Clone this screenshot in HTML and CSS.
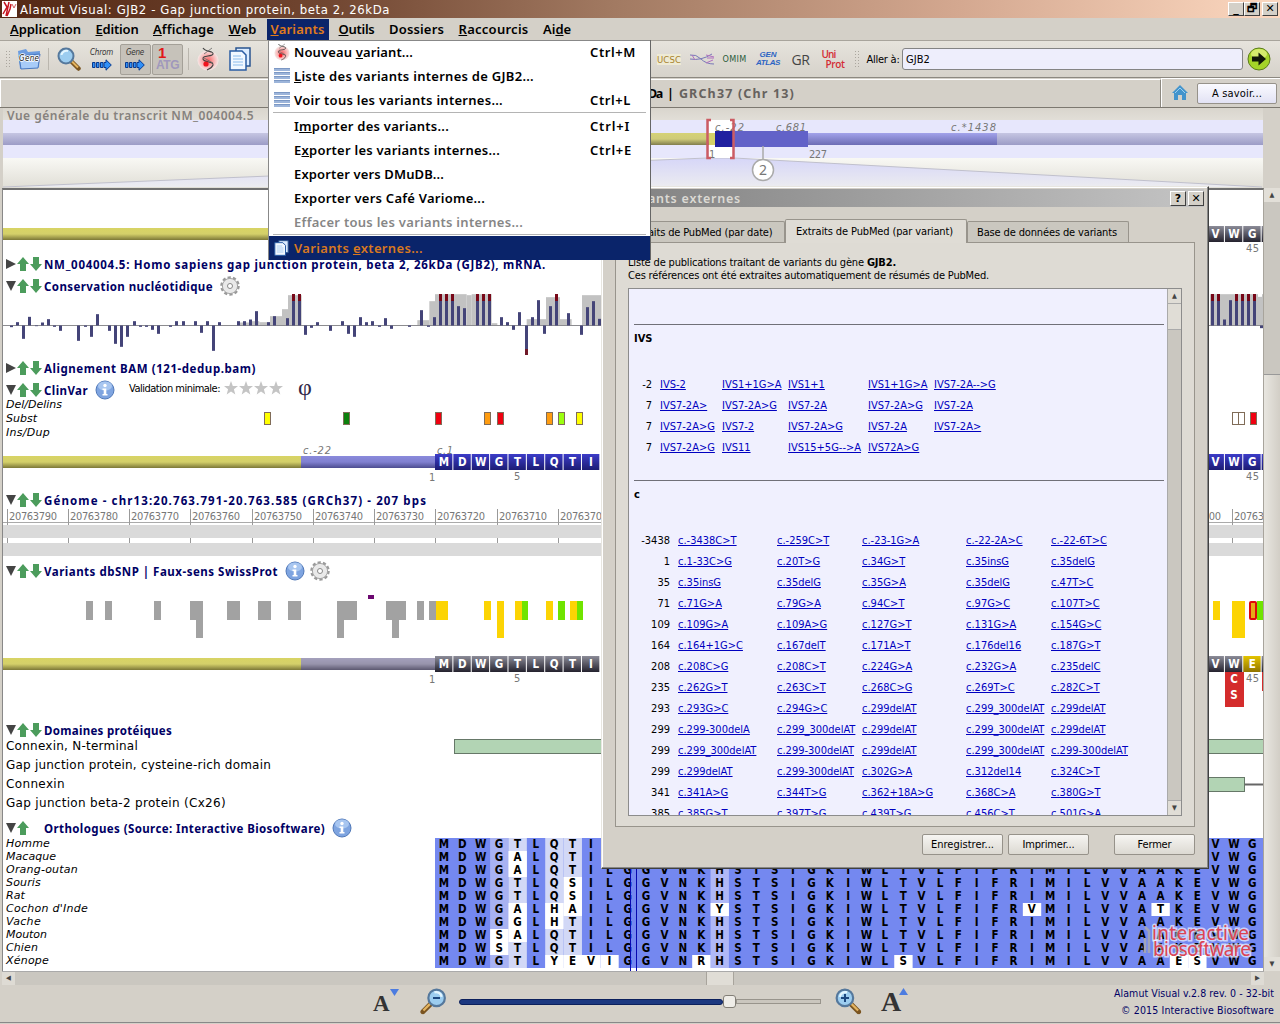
FILE: index.html
```html
<!DOCTYPE html>
<html lang="fr">
<head>
<meta charset="utf-8">
<title>Alamut Visual</title>
<link rel="stylesheet" href="styles.css">
</head>
<body>
<svg width="0" height="0" class="defs">
  <defs>
    <linearGradient id="gy" x1="0" y1="0" x2="0" y2="1"><stop offset="0" stop-color="#d8d464"/><stop offset=".5" stop-color="#d4d06a"/><stop offset="1" stop-color="#7c7838"/></linearGradient>
    <linearGradient id="gb" x1="0" y1="0" x2="0" y2="1"><stop offset="0" stop-color="#8a8adc"/><stop offset=".5" stop-color="#8080d0"/><stop offset="1" stop-color="#4c4c90"/></linearGradient>
    <linearGradient id="gv" x1="0" y1="0" x2="0" y2="1"><stop offset="0" stop-color="#a4a0bc"/><stop offset=".5" stop-color="#9894ac"/><stop offset="1" stop-color="#5c5870"/></linearGradient>
    <linearGradient id="gn" x1="0" y1="0" x2="0" y2="1"><stop offset="0" stop-color="#3c3cc8"/><stop offset="1" stop-color="#1c1c74"/></linearGradient>
    <linearGradient id="gk" x1="0" y1="0" x2="0" y2="1"><stop offset="0" stop-color="#8c8c98"/><stop offset="1" stop-color="#24222e"/></linearGradient>
    <linearGradient id="ge" x1="0" y1="0" x2="0" y2="1"><stop offset="0" stop-color="#e4c400"/><stop offset="1" stop-color="#907400"/></linearGradient>
    <linearGradient id="gl" x1="0" y1="0" x2="0" y2="1"><stop offset="0" stop-color="#c6c6e2"/><stop offset="1" stop-color="#9c9cc6"/></linearGradient>
    <linearGradient id="gm" x1="0" y1="0" x2="0" y2="1"><stop offset="0" stop-color="#a2a2ea"/><stop offset="1" stop-color="#6c6cb4"/></linearGradient>
    <linearGradient id="gt" x1="0" y1="0" x2="0" y2="1"><stop offset="0" stop-color="#d6d6f8"/><stop offset="1" stop-color="#ececf0"/></linearGradient>
    <linearGradient id="go" x1="0" y1="0" x2="0" y2="1"><stop offset="0" stop-color="#d9d5cd"/><stop offset=".6" stop-color="#fafaf6"/><stop offset="1" stop-color="#e0ded6"/></linearGradient>
    <radialGradient id="rd"><stop offset="0" stop-color="#f86060"/><stop offset=".6" stop-color="#fab4b4"/><stop offset="1" stop-color="#f4e8e6"/></radialGradient>
    <symbol id="arrU" viewBox="0 0 12 14"><path d="M6 0L12 7H9V14H3V7H0Z" fill="#4c9c5c"/></symbol>
    <symbol id="arrD" viewBox="0 0 12 14"><path d="M6 14L12 7H9V0H3V7H0Z" fill="#4c9c5c"/></symbol>
    <symbol id="info" viewBox="0 0 20 20"><circle cx="10" cy="10" r="9" fill="#7ea4e0" stroke="#5078b8"/><ellipse cx="10" cy="6" rx="7" ry="4.500" fill="#a8c6f0"/><circle cx="10" cy="5.500" r="1.700" fill="#fff"/><path d="M7.500 8.500H11.300V14H12.500V15.500H7.500V14H8.700V10H7.500Z" fill="#fff"/></symbol>
    <symbol id="gear" viewBox="0 0 20 20"><circle cx="10" cy="10" r="8.500" fill="none" stroke="#9a9a9a" stroke-width="2.500" stroke-dasharray="3.200 2.140"/><circle cx="10" cy="10" r="7.600" fill="#e9e9e9" stroke="#a4a4a4"/><circle cx="10" cy="10" r="2.500" fill="#fff" stroke="#888"/></symbol>
    <symbol id="star" viewBox="0 0 14 14"><path d="M7 0L8.800 5H14L9.900 8.200L11.300 13.500L7 10.400L2.700 13.500L4.100 8.200L0 5H5.200Z" fill="#c4c4c4"/></symbol>
    <symbol id="helix" viewBox="0 0 22 24"><ellipse cx="11" cy="13.500" rx="10.500" ry="10" fill="url(#rd)"/><path d="M6 1C8 5 17 4 16 7C15 10 5 8 6 12C7 16 17 14 16 18C15 21 12 22 10 23" fill="none" stroke="#444" stroke-width="1.100"/><path d="M15 1L7 7M7 11L16 16" fill="none" stroke="#666" stroke-width=".8"/><circle cx="9" cy="17" r="2.600" fill="#f0141e"/></symbol>
    <symbol id="docs" viewBox="0 0 22 24"><path d="M7 1H21V19H7Z" fill="#dcecff" stroke="#2a5490" stroke-width="1.500"/><path d="M1 4H13L17 8V23H1Z" fill="#f2f8ff" stroke="#2a5ca4" stroke-width="1.500"/><path d="M4 9H12M4 12H14M4 15H14M4 18H14" stroke="#8cbcec"/></symbol>
    <symbol id="list" viewBox="0 0 16 16"><path d="M0 1.500H16M0 5.500H16M0 9.500H16M0 13.500H16" stroke="#9db5da" stroke-width="3"/><path d="M0 .5H16M0 4.500H16M0 8.500H16M0 12.500H16" stroke="#7c98c4"/></symbol>
    <symbol id="arr" viewBox="0 0 20 12"><path d="M.5 3.500H3V8.500H.5ZM4.500 3.500H7V8.500H4.500ZM8.500 3.500H11V8.500H8.500ZM12 3.500H14V.8L19.300 6L14 11.200V8.500H12Z" fill="#3090f8" stroke="#083a90"/></symbol>
    <symbol id="lens" viewBox="0 0 24 24"><path d="M14 14L21.500 21.500" stroke="#7a5420" stroke-width="4.500" stroke-linecap="round"/><path d="M14.500 14L21 20.500" stroke="#e4b460" stroke-width="2"/><circle cx="9" cy="9" r="7.500" fill="#9ccdf0" stroke="#55789c" stroke-width="2"/><path d="M4.500 8A5 4.500 0 0 1 11 4" stroke="#e4f6ff" stroke-width="2" fill="none"/></symbol>
  </defs>
</svg>

<div class="app">
  <header class="titlebar">
    <svg width="15" height="16" viewBox="0 0 15 16"><path d="M0 0H15V16H0Z" fill="#fff"/><path d="M2 1L5 6L1 13M7 1L4 15M9 3L8 8L5 15" stroke="#c81420" stroke-width="1.500" fill="none"/><path d="M10 3L12 7L14 3" stroke="#d06060" fill="none"/></svg>
    <span class="grow"><span data-w="370">Alamut Visual: GJB2 - Gap junction protein, beta 2, 26kDa</span></span>
    <span class="wbtns"><i>_</i><i>🗗</i><i class="last">✕</i></span>
  </header>

  <nav class="menubar">
    <span data-w="71"><u>A</u>pplication</span><span data-w="43"><u>E</u>dition</span><span data-w="61"><u>A</u>ffichage</span><span data-w="28"><u>W</u>eb</span><span class="open"><span data-w="54"><u>V</u>ariants</span></span><span data-w="36"><u>O</u>utils</span><span data-w="55">Dossiers</span><span data-w="70"><u>R</u>accourcis</span><span data-w="28">Ai<u>d</u>e</span>
  </nav>

  <div class="toolbar">
    <span class="grip"></span>
    <span><svg width="24" height="22" viewBox="0 0 24 22"><path d="M1 3L9 1L11 4L23 3L22 19L3 21Z" fill="#6c9ce0"/><path d="M2 8L23 6L21 20L4 21Z" fill="#a8ccf8" stroke="#4878c0"/><text x="2" y="13" class="gene" textLength="20">Gene</text></svg></span>
    <span class="vsep"></span>
    <span><svg width="24" height="24"><use href="#lens"/></svg></span>
    <span class="stack"><em data-w="23">Chrom</em><svg width="20" height="12"><use href="#arr"/></svg></span>
    <span class="stack pressed"><em data-w="18">Gene</em><svg width="20" height="12"><use href="#arr"/></svg></span>
    <span class="stack pressed atg"><b>1</b><b class="l" data-w="23">ATG</b></span>
    <span class="vsep"></span>
    <span><svg width="22" height="24"><use href="#helix"/></svg></span>
    <span><svg width="22" height="24"><use href="#docs"/></svg></span>
    <span></span>
    <span class="ucsc"><span data-w="24">UCSC</span></span>
    <span><svg width="26" height="14" viewBox="0 0 26 14"><path d="M1 3Q7 2 12 7T25 12M1 7Q12 9 23 2" fill="none" stroke="#7878b8"/><path d="M3 3L6 8M17 3L25 5M17 11L24 8M18 6H25" stroke="#b070c0"/></svg></span>
    <span class="omim"><span data-w="24">OMIM</span></span>
    <span class="stack atlas"><b data-w="17">GEN</b><b data-w="24">ATLAS</b></span>
    <span class="gr"><span data-w="18">GR</span></span>
    <span class="stack uni"><span data-w="14">Uni</span><span class="prot" data-w="19">Prot</span></span>
    <span class="grip"></span>
    <span class="small"><span data-w="33">Aller à:</span></span>
    <span class="field"><span data-w="24">GJB2</span></span>
    <span><svg width="24" height="24" viewBox="0 0 24 24"><circle cx="12" cy="12" r="11" fill="#a4d428" stroke="#5c7c1c"/><ellipse cx="12" cy="7" rx="8" ry="5" fill="#d4ec6c"/><path d="M5 9.500H11.500V5.500L19 12L11.500 18.500V14.500H5Z" fill="#101808"/></svg></span>
  </div>

  <div class="infobar">
    <div class="infotext"><span data-w="14">Da</span><span>|</span><span class="muted" data-w="116">GRCh37 (Chr 13)</span></div>
    <div class="infoside">
      <svg width="16" height="16" viewBox="0 0 16 16"><path d="M0 8L8 0L16 8H14V15H10V10H6V15H2V8Z" fill="#4494cc"/><path d="M3 8L8 3L13 8" stroke="#9cd0f0" fill="none"/></svg>
      <span class="btn blue"><span data-w="50">A savoir...</span></span>
    </div>
  </div>

  <div class="overview">
    <svg id="overview" width="1260" height="80" viewBox="3 108 1260 80"></svg>
    <div class="ovtitle"><span data-w="247">Vue générale du transcrit NM_004004.5</span></div>
  </div>

  <div class="viewport">
    <main class="tracks">
      <section class="track" style="height:64px"><svg id="tA" width="1260" height="64" viewBox="3 190 1260 64"></svg></section>
      <section class="track raised" style="height:22px"><h2 class="closed"><i></i><svg><use href="#arrU"/></svg><svg><use href="#arrD"/></svg><span data-w="502">NM_004004.5: Homo sapiens gap junction protein, beta 2, 26kDa (GJB2), mRNA.</span></h2></section>
      <section class="track raised" style="height:82px"><svg id="tC" width="1260" height="82" viewBox="3 276 1260 82"></svg><h2><i></i><svg><use href="#arrU"/></svg><svg><use href="#arrD"/></svg><span data-w="169">Conservation nucléotidique</span><svg class="badge"><use href="#gear"/></svg></h2></section>
      <section class="track raised" style="height:21px"><h2 class="closed"><i></i><svg><use href="#arrU"/></svg><svg><use href="#arrD"/></svg><span data-w="212">Alignement BAM (121-dedup.bam)</span></h2></section>
      <section class="track" style="height:110px"><svg id="tE" width="1260" height="110" viewBox="3 379 1260 110"></svg>
        <div><h2><i></i><svg><use href="#arrU"/></svg><svg><use href="#arrD"/></svg><span data-w="44">ClinVar</span><svg class="badge"><use href="#info"/></svg><span class="valid"><span data-w="91">Validation minimale:</span></span><svg class="star"><use href="#star"/></svg><svg class="star"><use href="#star"/></svg><svg class="star"><use href="#star"/></svg><svg class="star"><use href="#star"/></svg><span class="phi">φ</span></h2>
        <ul class="sub"><li><span data-w="56">Del/Delins</span></li><li><span data-w="31">Subst</span></li><li><span data-w="44">Ins/Dup</span></li></ul></div></section>
      <section class="track" style="height:71px"><svg id="tF" width="1260" height="71" viewBox="3 489 1260 71"></svg><h2><i></i><svg><use href="#arrU"/></svg><svg><use href="#arrD"/></svg><span data-w="383">Génome - chr13:20.763.791-20.763.585 (GRCh37) - 207 bps</span></h2></section>
      <section class="track" style="height:159px"><svg id="tG" width="1260" height="159" viewBox="3 560 1260 159"></svg><h2><i></i><svg><use href="#arrU"/></svg><svg><use href="#arrD"/></svg><span data-w="234">Variants dbSNP | Faux-sens SwissProt</span><svg class="badge"><use href="#info"/></svg><svg class="badge2"><use href="#gear"/></svg></h2></section>
      <section class="track" style="height:98px"><svg id="tH" width="1260" height="98" viewBox="3 719 1260 98"></svg>
        <div><h2><i></i><svg><use href="#arrU"/></svg><svg><use href="#arrD"/></svg><span data-w="128">Domaines protéiques</span></h2>
        <ul class="domains"><li><span data-w="132">Connexin, N-terminal</span></li><li><span data-w="265">Gap junction protein, cysteine-rich domain</span></li><li><span data-w="59">Connexin</span></li><li><span data-w="220">Gap junction beta-2 protein (Cx26)</span></li></ul></div></section>
      <section class="track" style="height:154px"><svg id="tI" width="1260" height="154" viewBox="3 817 1260 154"></svg>
        <div><h2><i></i><svg><use href="#arrU"/></svg><svg></svg><span data-w="281">Orthologues (Source: Interactive Biosoftware)</span><svg class="badge"><use href="#info"/></svg></h2>
        <ul class="species"><li><span data-w="44">Homme</span></li><li><span data-w="50">Macaque</span></li><li><span data-w="72">Orang-outan</span></li><li><span data-w="35">Souris</span></li><li><span data-w="19">Rat</span></li><li><span data-w="82">Cochon d'Inde</span></li><li><span data-w="35">Vache</span></li><li><span data-w="41">Mouton</span></li><li><span data-w="32">Chien</span></li><li><span data-w="43">Xénope</span></li></ul></div></section>
    </main>
    <div class="vscroll"><i>▲</i><div class="vgutter"></div><div class="vthumb"></div><i>▼</i></div>
  </div>
  <div class="hscroll"><i>◀</i><span class="hthumb"></span><i>▶</i></div>

  <footer class="bottom">
    <svg class="za" width="28" height="34" viewBox="0 0 28 34"><text x="2" y="26" class="bigA">A</text><path d="M19 4H28L23.500 11Z" fill="#4c7ce0"/></svg>
    <svg class="zo" width="28" height="28" viewBox="0 0 28 28"><g transform="translate(27.500 0) scale(-1.100 1.100)"><use href="#lens" width="24" height="24"/></g><path d="M14 10H21" stroke="#1c4880" stroke-width="2"/></svg>
    <div class="slider"><div class="fill"></div><div class="knob"></div><div class="rest"></div></div>
    <svg class="zi" width="28" height="28" viewBox="0 0 28 28"><g transform="scale(1.100)"><use href="#lens" width="24" height="24"/></g><path d="M6 10H14M10 6V14" stroke="#1c4880" stroke-width="2"/></svg>
    <svg class="za" width="30" height="34" viewBox="0 0 30 34"><text x="1" y="26" class="bigA2">A</text><path d="M19 10H28L23.500 3Z" fill="#4c7ce0"/></svg>
    <div class="version"><span data-w="160">Alamut Visual v.2.8 rev. 0 - 32-bit</span><span data-w="153">© 2015 Interactive Biosoftware</span></div>
  </footer>
</div>

<div class="dialog">
  <div class="dtitle"><span data-w="120">Variants externes</span><i>?</i><i>✕</i></div>
  <div class="tabs"><span class="t1"><span data-w="144">Extraits de PubMed (par date)</span></span><span class="t2"><span data-w="157">Extraits de PubMed (par variant)</span></span><span class="t3"><span data-w="140">Base de données de variants</span></span></div>
  <div class="panel">
    <p><span data-w="268">Liste de publications traitant de variants du gène <b>GJB2.</b></span></p>
    <p><span data-w="361">Ces références ont été extraites automatiquement de résumés de PubMed.</span></p>
    <div class="listbox">
      <div class="listing">
        <hr>
        <h3>IVS</h3>
        <div class="refs ivs" id="ivs"></div>
        <hr class="second">
        <h3>c</h3>
        <div class="refs cdna" id="cdna"></div>
      </div>
      <div class="dscroll"><i>▲</i><div class="dthumb"></div><div class="dgutter"></div><i>▼</i></div>
    </div>
  </div>
  <div class="dbuttons"><span class="btn"><span data-w="63">Enregistrer...</span></span><span class="btn"><span data-w="52">Imprimer...</span></span><span class="btn last"><span data-w="34">Fermer</span></span></div>
</div>

<div class="menu">
  <div class="mi"><svg width="16" height="18"><use href="#helix"/></svg><span><span data-w="119">Nouveau <u>v</u>ariant...</span></span><span><span data-w="46">Ctrl+M</span></span></div>
  <div class="mi"><svg width="16" height="16"><use href="#list"/></svg><span><span data-w="240"><u>L</u>iste des variants internes de GJB2...</span></span></div>
  <div class="mi"><svg width="16" height="16"><use href="#list"/></svg><span><span data-w="209">Voir tous les variants internes...</span></span><span><span data-w="41">Ctrl+L</span></span></div>
  <div class="ms"></div>
  <div class="mi"><i></i><span><span data-w="155">I<u>m</u>porter des variants...</span></span><span><span data-w="40">Ctrl+I</span></span></div>
  <div class="mi"><i></i><span><span data-w="206">E<u>x</u>porter les variants internes...</span></span><span><span data-w="42">Ctrl+E</span></span></div>
  <div class="mi"><i></i><span><span data-w="150">Exporter vers DMuDB...</span></span></div>
  <div class="mi"><i></i><span><span data-w="191">Exporter vers Café Variome...</span></span></div>
  <div class="mi off"><i></i><span><span data-w="229">Effacer tous les variants internes...</span></span></div>
  <div class="ms"></div>
  <div class="mi sel"><svg width="15" height="16"><use href="#docs"/></svg><span><span data-w="129">Variants <u>e</u>xternes...</span></span></div>
</div>
<script src="app.js"></script>
</body>
</html>
```

FILE: styles.css
```css
* { box-sizing: border-box; }
body { margin: 0; width: 1280px; height: 1024px; overflow: hidden; background: #d4d0c8; font-family: "DejaVu Sans Condensed", "DejaVu Sans", sans-serif; font-stretch: condensed; font-size: 11px; color: #000; position: relative; }
.defs { position: absolute; }
i, em { font-style: normal; }
u { text-underline-offset: 1px; }
[data-w] { display: inline-block; white-space: pre; }
.app { display: flex; flex-direction: column; height: 1024px; }

.titlebar { height: 18px; display: flex; align-items: center; padding: 0 2px; gap: 3px; background: linear-gradient(90deg, #542814, #704530 25%, #a27a62 48%, #d4a890 75%, #fcd8c0); color: #fff; font-size: 13px; }
.titlebar .grow { flex: 1; }
.wbtns { display: flex; }
.wbtns i, .dtitle i { width: 16px; height: 14px; background: #d4d0c8; border: 1px solid; border-color: #fff #404040 #404040 #fff; color: #000; font: bold 11px/12px "DejaVu Sans", sans-serif; text-align: center; }
.wbtns .last { margin-left: 2px; }
.menubar { height: 22px; display: flex; gap: 14.5px; padding: 0 10px; line-height: 23px; font: 600 13px/23px "Noto Sans", sans-serif; }
.menubar .open { background: #0a246a; color: #e07c1c; padding: 0 4px; margin: 1px -4.500px 0; line-height: 21px; }
.toolbar { height: 38px; display: grid; grid-template-columns: 15px 28px 11px 30px 35px 32px 33px 8px 31px 33px 396px 34px 32px 33px 34px 31px 34px 14px 38px 341px 32px; align-items: center; justify-items: center; background: linear-gradient(#e6e3dc, #d6d2ca); border-top: 1px solid #a8a49c; border-bottom: 1px solid #8c8880; }
.toolbar > span { display: flex; justify-content: center; align-items: center; white-space: nowrap; }
.toolbar > .grip { width: 6px; height: 18px; background-image: radial-gradient(#aaa69e 35%, transparent 40%); background-size: 3px 3px; }
.toolbar > .vsep { width: 1px; height: 22px; background: #bab6ae; }
.toolbar .stack { flex-direction: column; height: 31px; font-size: 8px; line-height: 10px; }
.stack em { font-style: italic; margin-bottom: 1px; color: #333; }
.pressed { width: 31px; background: #c6c2ba; border: 1px solid #a4a098; border-radius: 2px; }
.atg b { font: bold 15px/13px "Liberation Sans", sans-serif; color: #e01818; align-self: flex-start; margin-left: 5px; }
.toolbar .atg .l { color: #a098bc; font-size: 12px; line-height: 13px; margin-left: 3px; }
.gene { font: italic 8px "DejaVu Sans Condensed", sans-serif; fill: #111; stroke: #fff; stroke-width: 1.500px; paint-order: stroke; }
.ucsc { color: #a8822c; background: #eeead4; font-size: 9.500px; }
.omim { color: #2c5c3c; font-size: 9px; }
.atlas b { color: #2c64c4; font: italic bold 8px/8px "Liberation Sans", sans-serif; }
.gr { font: 14px "Open Sans", sans-serif; color: #444; }
.toolbar .uni { color: #d42c34; font: 600 10px/10px "Open Sans", sans-serif; align-items: flex-start; }
.prot { margin-left: 4px; }
.toolbar .field { width: 341px; height: 22px; background: #eeeefc; border: 1px solid #848484; border-radius: 3px; justify-content: flex-start; padding-left: 3px; }

.infobar { height: 30px; display: flex; border-bottom: 1px solid #7c7870; }
.infotext { width: 1161px; margin-top: 1px; padding-left: 647px; display: flex; align-items: center; gap: 5px; border-right: 1px solid #8c8880; border-top: 1px solid #fff; border-left: 1px solid #fff; font: bold 12.500px "Noto Sans", sans-serif; }
.muted { color: #66625e; }
.infoside { flex: 1; display: flex; align-items: center; padding-left: 10px; gap: 9px; border-top: 1px solid #fff; border-left: 1px solid #fff; }
.btn { display: flex; justify-content: center; align-items: center; width: 81px; height: 21px; border: 1px solid #96928a; border-radius: 2px; background: linear-gradient(#f6f5f2, #dcd9d2); }
.btn.blue { width: 80px; background: linear-gradient(#fafaff, #e2e2f4); }
.overview { height: 80px; display: grid; padding-left: 3px; }
.overview > *, .track > * { grid-area: 1 / 1; min-width: 0; }
.ovtitle { font: 600 12px/15px "Noto Sans", sans-serif; color: #86827e; padding-left: 4px; }
.viewport { height: 783px; display: flex; padding-left: 2px; }
.tracks { width: 1262px; border-left: 1px solid #888; border-right: 1px solid #a8a49c; border-top: 2px solid #707070; background: #fff; }
.track { display: grid; position: relative; }
.track > svg { display: block; }
h2 { margin: 0; height: 22px; display: flex; align-items: center; padding-left: 3px; font: bold 11.500px "Noto Sans", sans-serif; color: #000064; }
.raised h2 { height: 20px; }
h2 > i { width: 10px; height: 10px; margin-right: 1px; background: #444; clip-path: polygon(0 0, 100% 0, 50% 100%); }
h2.closed > i { clip-path: polygon(0 0, 100% 50%, 0 100%); }
h2 > svg { width: 12px; height: 14px; margin-right: 1px; }
h2 > svg + svg { margin-right: 2px; }
h2 > svg.badge { width: 20px; height: 20px; margin-left: 7px; }
h2 > svg.badge2 { width: 20px; height: 20px; margin-left: 4px; }
h2 > svg.star { width: 14px; height: 14px; margin: -4px .5px 0; }
.valid { font: 11px "DejaVu Sans Condensed", sans-serif; color: #000; margin: -4px 3px 0 13px; }
.phi { font: 24px/20px "Liberation Serif", serif; color: #302848; margin-left: 15px; margin-top: -6px; }
ul { margin: 0; padding: 0 0 0 3px; list-style: none; }
.sub { margin-top: -3.500px; font: italic 11px/14px "DejaVu Sans", sans-serif; }
.domains { margin-top: -4px; font: 12px/19px "DejaVu Sans", sans-serif; }
.species { font: italic 11px/13px "DejaVu Sans", sans-serif; margin-top: -2px; }
.vscroll { width: 16px; display: flex; flex-direction: column; background: #e2dfd8; }
.vscroll i, .dscroll i { height: 14px; font-size: 7px; line-height: 14px; text-align: center; color: #444; }
.vgutter { height: 173px; background: #cac7c0; border-bottom: 1px solid #999; }
.vthumb { flex: 1; background: linear-gradient(90deg, #e8e6e0, #d2cec6); }
.hscroll { height: 14px; margin: 0 16px 0 2px; display: flex; background: #cac7c0; border-top: 1px solid #aaa; }
.hscroll i { width: 13px; background: #dedbd4; font-size: 7px; line-height: 13px; text-align: center; color: #444; }
.hthumb { width: 28px; margin: 0 517px 0 691px; background: #e0ddd6; border: solid #a8a49c; border-width: 0 1px; }
.bottom { height: 38px; display: flex; align-items: center; padding: 0 6px 4px 371px; border-bottom: 1px solid #888; }
.bigA { font: bold 23px "Liberation Serif", serif; fill: #333; }
.bigA2 { font: bold 28px "Liberation Serif", serif; fill: #333; }
.zo { margin-left: 20px; }
.slider { width: 362px; margin: 0 14px 0 12px; display: flex; align-items: center; }
.fill { width: 264px; height: 6px; background: #1c3880; border: 1px solid #0c205c; border-radius: 3px; }
.knob { width: 13px; height: 13px; background: #efede8; border: 1px solid #827e76; border-radius: 3px; }
.rest { flex: 1; height: 5px; border: 1px solid #98948c; background: #cac6be; }
.zi { margin-right: 17px; }
.version { flex: 1; display: flex; flex-direction: column; align-items: flex-end; line-height: 17px; color: #000064; font-size: 10.500px; }

.dialog { position: absolute; left: 601px; top: 186px; width: 608px; height: 683px; background: #d4d0c8; border: 1px solid; border-color: #e8e6e0 #404040 #404040 #e8e6e0; box-shadow: inset -1px -1px #888, inset 1px 1px #fff; padding: 2px 4px 0 2px; display: flex; flex-direction: column; }
.dtitle { height: 18px; display: flex; align-items: center; gap: 2px; padding: 0 0 0 17px; background: linear-gradient(90deg, #808080, #c4c4c4); color: #dcdad4; font: 600 12.500px "Noto Sans", sans-serif; }
.dtitle > span { margin-right: auto; }
.dtitle i { height: 15px; line-height: 13px; }
.tabs { height: 35px; padding: 12px 0 0 12px; display: flex; align-items: flex-end; }
.tabs > span { height: 21px; display: flex; align-items: center; justify-content: center; border: 1px solid #98948c; border-bottom: 0; background: #cac7bf; border-radius: 2px 2px 0 0; }
.tabs .t1 { width: 169px; }
.tabs .t2 { width: 182px; height: 24px; background: #dfdcd5; margin-bottom: -1px; position: relative; padding-right: 3px; }
.tabs .t3 { width: 162px; padding-right: 2px; }
.panel { margin: 0 9px 0 11px; height: 585px; border: 1px solid #98948c; background: #dedbd4; padding: 13px 12px 10px 12px; }
.panel p { margin: 0; height: 13px; line-height: 13px; }
.listbox { margin-top: 6px; height: 528px; display: flex; border: 1px solid #8c8c8c; }
.listing { flex: 1; background: #f0f0fe; overflow: hidden; padding: 0 3px 0 5px; height: 526px; }
hr { margin: 35px 0 0; border: 0; border-top: 1px solid #707078; }
hr.second { margin-top: 18px; }
h3 { margin: 7px 0 0; font-size: 11px; line-height: 14px; height: 46px; }
.refs { display: grid; grid-auto-rows: 21px; line-height: 14px; }
.refs a { color: #0000c0; text-decoration: underline; white-space: nowrap; }
.refs span { text-align: right; padding-right: 8px; }
.ivs { grid-template-columns: 26px 62px 66px 80px 66px 1fr; }
.cdna { grid-template-columns: 44px 99px 85px 104px 85px 1fr; }
.dscroll { width: 14px; display: flex; flex-direction: column; background: #e0ddd6; border-left: 1px solid #aaa; }
.dthumb { height: 27px; border: solid #aaa; border-width: 1px 0; }
.dgutter { flex: 1; background: #cac7c0; border-bottom: 1px solid #aaa; }
.dbuttons { display: flex; justify-content: flex-end; gap: 5px; padding: 7px 9px 0 0; }
.dbuttons .last { margin-left: 20px; }

.menu { position: absolute; left: 268px; top: 40px; width: 383px; height: 220px; background: #fff; border-left: 1px solid #888; border-right: 1px solid #666; box-shadow: inset 0 1px #888; font: 600 13px "Noto Sans", sans-serif; }
.mi { height: 24px; display: grid; grid-template-columns: 20px 296px 1fr; padding-left: 5px; align-items: center; line-height: 24px; }
.ms { height: 2px; margin: 0 4px; border-top: 1px solid #b4b4b4; }
.off { color: #868686; }
.sel { background: #0a246a; color: #d87820; }
.a9 { font: 11px "DejaVu Sans Condensed", sans-serif; fill: #777; }
.aa { font: bold 11.500px "DejaVu Sans Condensed", sans-serif; text-anchor: middle; }
.ital { font-style: italic; }
.logo { font: 19px "Noto Sans", sans-serif; fill: #dc4454; stroke: #fff; stroke-width: 3px; paint-order: stroke; stroke-opacity: .65; }
```

FILE: app.js
```js
const PITCH = 18.37, X0 = 435;
const rect = (x, y, w, h, fill, extra = '') => `<rect x="${x}" y="${y}" width="${w}" height="${h}" fill="${fill}" ${extra}/>`;
const line = (x1, y1, x2, y2, c, w = 1) => `<path d="M${x1} ${y1}L${x2} ${y2}" stroke="${c}" stroke-width="${w}" fill="none"/>`;
const label = (x, y, s, w, cls = '') => `<text x="${x}" y="${y}" class="a9 ${cls}" ${w ? `textLength="${w}"` : ''}>${s}</text>`;
const put = (id, s) => { document.getElementById(id).innerHTML = s; };
const HUMAN = 'MDWGTLQTILGGVNKHSTSIGKIWLTVLFIFRIMILVVAAKEVWG';

function residues(y, fill, from, to, swap = {}) {
  let s = '';
  for (let i = from; i < to; i++) {
    const x = X0 + i * PITCH, c = swap[i] || HUMAN[i] || '';
    s += rect(x, y, PITCH - 1, 16, swap[i] ? 'url(#ge)' : fill);
    s += `<text x="${x + 9}" y="${y + 12}" class="aa" fill="#fff">${c}</text>`;
  }
  return s;
}

// transcript overview
put('overview', rect(3, 108, 1260, 80, 'url(#go)') + rect(3, 120, 1260, 38, '#e7e7fc') + rect(3, 133, 1260, 12, 'url(#gl)')
  + rect(500, 133, 215, 12, 'url(#gy)', 'opacity=".85"')
  + `<path d="M3 187L707 158H734L1262 187Z" fill="url(#gt)"/><path d="M3 187L707 158H734L1262 187" fill="none" stroke="#c0c0cc"/>`
  + rect(709, 120, 24, 38, '#fff') + rect(709, 133, 7, 12, '#d4d068')
  + rect(808, 133, 189, 12, 'url(#gm)') + rect(734, 131, 74, 16, '#6262c8') + rect(715, 131, 19, 16, '#2020a0')
  + label(715, 131, 'c.-22', 29, 'ital') + label(776, 131, 'c.681', 30, 'ital') + label(951, 131, 'c.*1438', 45, 'ital')
  + label(709, 158, '1') + label(809, 158, '227', 18)
  + `<path d="M711 120H707.500V158H711M730 120H733.500V158H730" fill="none" stroke="#cc5c64" stroke-width="2.500"/>`
  + line(763, 146, 763, 160, '#aaa', 1.500) + `<circle cx="763" cy="170" r="10.500" fill="#fff" stroke="#aaa" stroke-width="1.500"/>`
  + `<text x="763" y="175" text-anchor="middle" fill="#777" font-family="Noto Sans" font-size="14">2</text>`);

put('tA', rect(3, 228, 800, 12, 'url(#gy)') + residues(226, 'url(#gk)', 42, 46) + label(1246, 252, '45', 13));

// conservation: [x, value] pairs, in thirds of a pixel
const left = [35,-5,52,10,70,-40,88,26,109,-2,127,9,145,19,163,-4,181,-16,235,-46,256,-4,274,-34,292,34,328,-16,346,-55,364,-64,382,-34,403,13,421,-4,439,-4,457,-13,475,-25,511,-4,529,13,550,13,586,13,604,-22,622,13,640,-76,658,10,715,13,733,13,751,18,769,43,805,10,823,28,862,22,880,94,898,94];
const mid = [16,-28,34,-7,52,10,91,-16,127,13,145,-25,163,-34,181,25,199,10,217,13,238,-4,256,22,274,-10,328,-4,364,46,385,-4,403,25,421,94,439,94,457,94,475,58,493,52,532,94,550,94,568,94,604,25,622,10,640,-13,658,40,679,-88,697,25,715,76,733,-25,751,58,769,94,805,37,844,-28,862,55,880,73,898,20];
const right = [217,94,235,94,253,18,271,76,289,94,307,94,325,94,343,94,364,-8];
const shade = [[0,[712,751,9,751,778,13,778,810,10,810,846,28,846,864,49,864,905,91]],[300,[352,388,16,388,405,73,405,500,94,500,515,91,515,575,94,575,592,7,680,738,19,738,780,85,780,815,19,846,903,91]],[1140,[210,354,94,354,366,86,366,372,94]]];
let cons = '';
for (const [o, a] of shade) for (let i = 0; i < a.length; i += 3) cons += rect(o + a[i] / 3, 325.5 - a[i + 2] / 3, (a[i + 1] - a[i]) / 3, a[i + 2] / 3, '#c2c2c2');
cons += line(3, 325.5, 1263, 325.5, '#8c8c90');
for (const [o, a] of [[0, left], [300, mid], [1140, right]]) for (let i = 0; i < a.length; i += 2) {
  const v = a[i + 1] / 3, x = Math.round(o + a[i] / 3 - 1.5);
  cons += rect(x, v > 0 ? 325.5 - v : 325.5, 3, Math.abs(v), '#444478');
  if (v > 31) cons += rect(x, 294, 3, 7, '#780818');
  if (v < -28) cons += rect(x, 349, 3, 6, '#701828');
}
put('tC', cons);

const mark = (x, c) => rect(x + .5, 412.5, 6, 12, c, 'stroke="#806c58"');
const strip = (y, g) => rect(3, y, 298, 12, 'url(#gy)') + rect(301, y, 134, 12, g);
put('tE', [[264,'#ff0'],[343,'#0c800c'],[435,'#f00010'],[484,'#ff9c10'],[497,'#f00010'],[546,'#ff9c10'],[558,'#9cff10'],[576,'#ff0'],[1232,'#fff'],[1238,'#fff'],[1250,'#f00010']].map(m => mark(...m)).join('')
  + strip(456, 'url(#gb)') + residues(454, 'url(#gn)', 0, 9) + residues(454, 'url(#gn)', 42, 46)
  + label(303, 454, 'c.-22', 28, 'ital') + label(437, 454, 'c.1', 16, 'ital') + label(429, 481, '1') + label(514, 480, '5') + label(1246, 480, '45', 13));

// genomic ruler
let ruler = line(3, 522.5, 1263, 522.5, '#aaa') + rect(3, 525, 1260, 13, '#dadada') + rect(3, 543, 1260, 13, '#dadada');
[7, 68, 129, 190, 252, 313, 374, 435, 497, 558, 1171, 1232].forEach((x, i) => {
  const n = i < 10 ? 20763790 - i * 10 : 20763600 - (i - 10) * 10;
  ruler += line(x + .5, 509, x + .5, 525, '#999') + line(x + .5, 538, x + .5, 543, '#999') + label(x + 2, 520, n, 48);
});
put('tF', ruler);

const G = '#a2a2a2', Y = '#fcd404', N = '#70e400';
put('tG', [[86,7,G],[105,7,G],[154,7,G],[190,13,G],[227,13,G],[258,13,G],[288,13,G],[337,20,G],[386,20,G],[417,7,G],[429,7,G],[436,12,Y],[484,7,Y],[515,7,Y],[522,6,N],[546,7,Y],[558,7,N],[570,7,Y],[577,6,N],[1213,7,Y],[1257,6,N]].map(([x, w, c]) => rect(x, 601, w, 19, c)).join('')
  + rect(196, 601, 7, 37, G) + rect(337, 601, 7, 37, G) + rect(392, 601, 7, 37, G) + rect(497, 601, 7, 37, Y) + rect(1232, 601, 13, 37, Y) + rect(1250, 602, 6, 17, '#e8a818', 'stroke="#e00808" stroke-width="2" rx="1"')
  + rect(368, 595, 6, 4, '#6c0870') + strip(658, 'url(#gv)') + residues(656, 'url(#gk)', 0, 9) + residues(656, 'url(#gk)', 42, 46, { 44: 'E' })
  + rect(1225, 672, 19, 35, '#d42c2c') + rect(1262, 672, 2, 19, '#d42c2c')
  + `<text x="1234" y="683" class="aa" fill="#fff">C</text><text x="1234" y="699" class="aa" fill="#fff">S</text>`
  + label(429, 683, '1') + label(514, 682, '5') + label(1246, 682, '45', 13));

put('tH', rect(454.5, 739.5, 830, 14, '#b2d4b4', 'stroke="#667868"') + rect(900.5, 777.5, 344, 14, '#b2d4b4', 'stroke="#667868"') + line(1245, 784.5, 1263, 784.5, '#666', 2));

// ortholog alignment
const diffs = [{}, {4:'A'}, {4:'A'}, {7:'S'}, {7:'S'}, {4:'A',6:'H',7:'A',15:'Y',32:'V',39:'T'}, {4:'G',6:'H'}, {3:'S',4:'A'}, {3:'S'}, {6:'Y',7:'E',8:'V',9:'I',14:'R',25:'S',40:'E',41:'S'}];
const tint = { 3: '#a8b2f2', 4: '#d2d8f6', 6: '#d2d8f6', 7: '#d2d8f6', 15: '#b0b8f6' };
let al = rect(435, 838, 828, 130, '#7488f0');
for (const c in tint) al += rect(X0 + c * PITCH, 838, PITCH, 130, tint[c]);
diffs.forEach((d, r) => {
  for (let i = 0; i < 45; i++) {
    const x = X0 + i * PITCH, y = 838 + r * 13;
    if (d[i]) al += rect(x, y, PITCH, 13, '#fff');
    al += `<text x="${x + 9}" y="${y + 10}" class="aa" font-size="11">${d[i] || HUMAN[i]}</text>`;
  }
});
al += line(630.5, 838, 630.5, 971, '#0808b0') + line(636.5, 838, 636.5, 971, '#0808b0')
  + `<text x="1152" y="940" class="logo" textLength="97">interactive</text><text x="1153" y="956" class="logo" textLength="98">biosoftware</text>`
  + `<path d="M1145 927L1149 931V953M1145 938V953" stroke="#a0a4b8" stroke-width="2.500" fill="none"/>`;
put('tI', al);

const fillRefs = (id, rows) => put(id, rows.map(r => { const c = r.split(' '); while (c.length < 6) c.push(''); return `<span>${c[0]}</span>` + c.slice(1).map(t => `<div><a>${t.replace(/>/g, '&gt;')}</a></div>`).join(''); }).join(''));
fillRefs('ivs', ['-2 IVS-2 IVS1+1G>A IVS1+1 IVS1+1G>A IVS7-2A-->G', '7 IVS7-2A> IVS7-2A>G IVS7-2A IVS7-2A>G IVS7-2A', '7 IVS7-2A>G IVS7-2 IVS7-2A>G IVS7-2A IVS7-2A>', '7 IVS7-2A>G IVS11 IVS15+5G-->A IVS72A>G']);
fillRefs('cdna', ['-3438 c.-3438C>T c.-259C>T c.-23-1G>A c.-22-2A>C c.-22-6T>C', '1 c.1-33C>G c.20T>G c.34G>T c.35insG c.35delG', '35 c.35insG c.35delG c.35G>A c.35delG c.47T>C', '71 c.71G>A c.79G>A c.94C>T c.97G>C c.107T>C', '109 c.109G>A c.109A>G c.127G>T c.131G>A c.154G>C', '164 c.164+1G>C c.167delT c.171A>T c.176del16 c.187G>T', '208 c.208C>G c.208C>T c.224G>A c.232G>A c.235delC', '235 c.262G>T c.263C>T c.268C>G c.269T>C c.282C>T', '293 c.293G>C c.294G>C c.299delAT c.299_300delAT c.299delAT', '299 c.299-300delA c.299_300delAT c.299delAT c.299_300delAT c.299delAT', '299 c.299_300delAT c.299-300delAT c.299delAT c.299_300delAT c.299-300delAT', '299 c.299delAT c.299-300delAT c.302G>A c.312del14 c.324C>T', '341 c.341A>G c.344T>G c.362+18A>G c.368C>A c.380G>T', '385 c.385G>T c.397T>G c.439T>G c.456C>T c.501G>A']);

// spread each label over its nominal width
document.querySelectorAll('[data-w]').forEach(el => {
  const w = el.getBoundingClientRect().width;
  el.style.letterSpacing = ((el.dataset.w - w) / el.textContent.length).toFixed(3) + 'px';
});
```
